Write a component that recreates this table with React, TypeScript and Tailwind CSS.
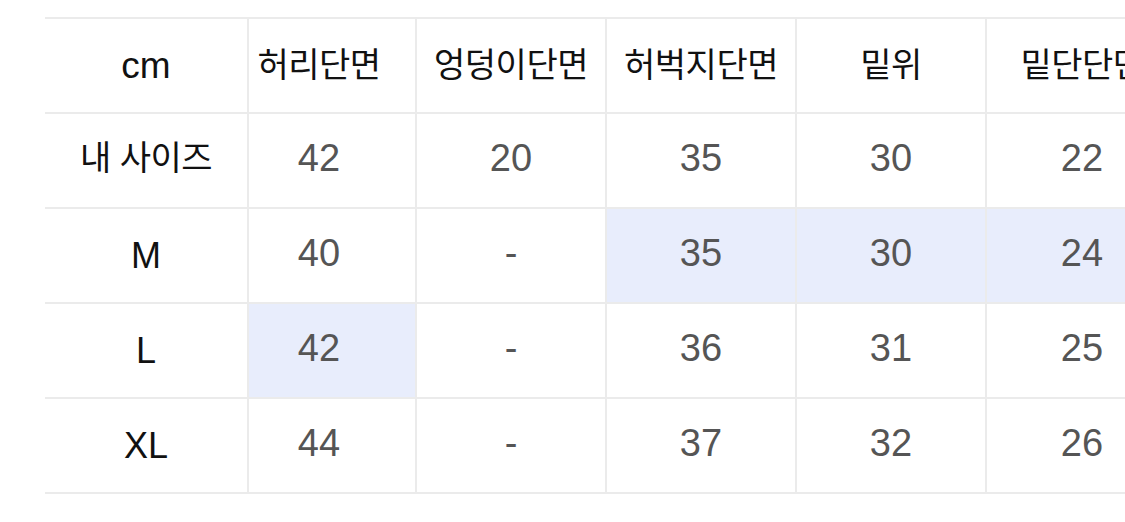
const columns = ["허리단면", "엉덩이단면", "허벅지단면", "밑위", "밑단단면"];

type Row = { label: string; values: string[]; highlight: number[] };

const rows: Row[] = [
  { label: "내 사이즈", values: ["42", "20", "35", "30", "22"], highlight: [] },
  { label: "M", values: ["40", "-", "35", "30", "24"], highlight: [2, 3, 4] },
  { label: "L", values: ["42", "-", "36", "31", "25"], highlight: [0] },
  { label: "XL", values: ["44", "-", "37", "32", "26"], highlight: [] },
];

const font = "font-['Liberation_Sans','Noto_Sans_CJK_KR',sans-serif]";

export default function App() {
  return (
    <div className={`w-[1125px] h-[522px] overflow-hidden bg-white ${font}`}>
      <div className="pl-[45px] pt-[17px]">
        <div className="grid w-max grid-cols-[202px_166px_188px_188px_188px_190px] auto-rows-[93px] gap-[2px] py-[2px] bg-[#ebebeb]">
          <div className="flex items-center justify-center bg-white text-[37px] text-[#111]">cm</div>
          {columns.map((c, i) => (
            <div
              key={c}
              className={`flex items-center justify-center bg-white text-[34px] tracking-[-0.5px] text-[#111] ${i === 0 ? "pr-[26px]" : ""}`}
            >
              {c}
            </div>
          ))}
          {rows.map((r) => (
            <>
              <div
                key={r.label}
                className={`flex items-center justify-center bg-white text-[#111] ${r.label === "내 사이즈" ? "text-[34px] tracking-[-0.5px] pb-[4px]" : "text-[36px]"}`}
              >
                {r.label}
              </div>
              {r.values.map((v, i) => (
                <div
                  key={r.label + i}
                  className={`flex items-center justify-center pb-[4px] text-[38px] text-[#555] ${r.highlight.includes(i) ? "bg-[#e8edfc]" : "bg-white"} ${i === 0 ? "pr-[26px]" : ""}`}
                >
                  {v}
                </div>
              ))}
            </>
          ))}
        </div>
      </div>
    </div>
  );
}
